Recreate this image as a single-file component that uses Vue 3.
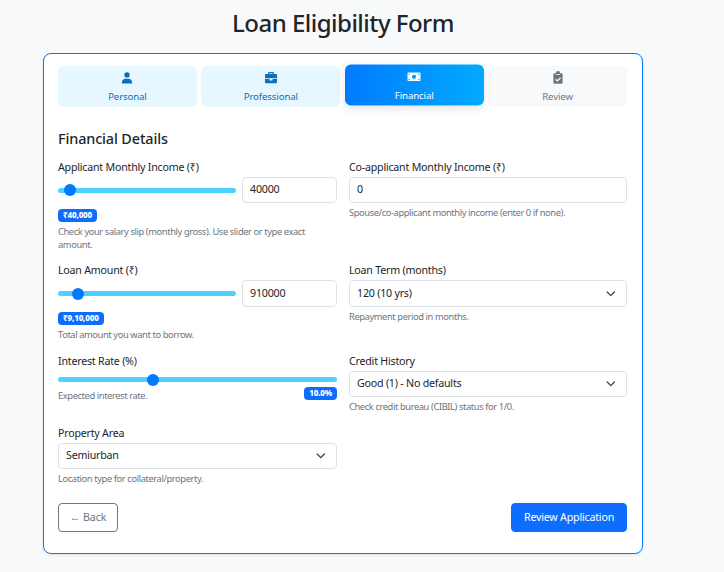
<script setup>
import { ref } from 'vue'

const income = ref('40000')
const coIncome = ref('0')
const amount = ref('910000')
const term = ref('120 (10 yrs)')
const credit = ref('Good (1) - No defaults')
const area = ref('Semiurban')

const sliders = { income: 6.75, amount: 11.25, rate: 34.1 }

const steps = [
  {
    label: 'Personal',
    state: 'done',
    paths: [
      'M7 1.200a2.700 2.700 0 1 1 0 5.400a2.700 2.700 0 0 1 0-5.400z',
      'M1.900 12.500v-.9C1.900 9.100 3.600 7.700 5.700 7.700h2.600c2.100 0 3.800 1.400 3.800 3.900v.9z'
    ]
  },
  {
    label: 'Professional',
    state: 'done',
    paths: [
      'M4 3V2.200Q4 1 5.200 1h3.600Q10 1 10 2.200V3h1.800Q13 3 13 4.200V7.300H1V4.200Q1 3 2.200 3zM5.200 3h3.600V2.200H5.200z',
      'M1 8h4.500v1.400h3V8H13v3.200Q13 12.300 11.800 12.300H2.200Q1 12.300 1 11.200z'
    ]
  },
  {
    label: 'Financial',
    state: 'active',
    paths: [
      'M1.300 3h11.400q.8 0 .8.8v6.900q0 .8-.8.8H1.300q-.8 0-.8-.8V3.800Q.5 3 1.300 3zM7 5.200a2.050 2.050 0 1 0 0 4.100a2.050 2.050 0 0 0 0-4.100zM1.600 4.100v1.300a1.300 1.300 0 0 0 1.300-1.300zM12.400 4.100h-1.300a1.300 1.300 0 0 0 1.300 1.300zM1.600 10.400h1.300a1.300 1.300 0 0 0-1.300-1.300zM12.400 10.400V9.100a1.300 1.300 0 0 0-1.300 1.300z'
    ]
  },
  {
    label: 'Review',
    state: 'todo',
    paths: [
      'M3.600 2.200h1.300a2.100 2.100 0 0 1 4.200 0h1.300q1.200 0 1.200 1.200v8.200q0 1.200-1.200 1.200H3.600q-1.200 0-1.200-1.200V3.400q0-1.200 1.200-1.200zM4.800 3.300v.7h4.400v-.7zM5 7.900l-.8.8 2.200 2.100 3.600-3.600-.9-.9-2.700 2.800z'
    ]
  }
]
</script>

<template>
  <main class="page">
    <h1 class="title"><span>Loan Eligibility Form</span></h1>

    <section class="card">
      <nav class="steps">
        <div v-for="step in steps" :key="step.label" class="step" :class="step.state">
          <svg class="step-icon" viewBox="0 0 14 14" fill="currentColor" fill-rule="evenodd">
            <path v-for="(d, i) in step.paths" :key="i" :d="d" />
          </svg>
          <span class="step-label">{{ step.label }}</span>
        </div>
      </nav>

      <h2 class="heading">Financial Details</h2>

      <form class="fields" @submit.prevent>
        <div class="field">
          <label class="label">Applicant Monthly Income (₹)</label>
          <div class="slider-row">
            <div class="range">
              <div class="thumb" :style="{ left: sliders.income + '%' }"></div>
            </div>
            <input v-model="income" class="control short" />
          </div>
          <span class="badge below">₹40,000</span>
          <p class="help">Check your salary slip (monthly gross). Use slider or type exact<br />amount.</p>
        </div>

        <div class="field">
          <label class="label">Co-applicant Monthly Income (₹)</label>
          <input v-model="coIncome" class="control" />
          <p class="help after-control">Spouse/co-applicant monthly income (enter 0 if none).</p>
        </div>

        <div class="field">
          <label class="label">Loan Amount (₹)</label>
          <div class="slider-row tall">
            <div class="range">
              <div class="thumb" :style="{ left: sliders.amount + '%' }"></div>
            </div>
            <input v-model="amount" class="control short" />
          </div>
          <span class="badge below">₹9,10,000</span>
          <p class="help">Total amount you want to borrow.</p>
        </div>

        <div class="field">
          <label class="label">Loan Term (months)</label>
          <div class="select tall">
            <span>{{ term }}</span>
            <svg class="chevron" viewBox="0 0 16 16"><path d="m2 5 6 6 6-6" /></svg>
          </div>
          <p class="help after-control">Repayment period in months.</p>
        </div>

        <div class="field">
          <label class="label">Interest Rate (%)</label>
          <div class="range full">
            <div class="thumb" :style="{ left: sliders.rate + '%' }"></div>
          </div>
          <div class="rate-row">
            <p class="help">Expected interest rate.</p>
            <span class="badge">10.0%</span>
          </div>
        </div>

        <div class="field">
          <label class="label">Credit History</label>
          <div class="select">
            <span>{{ credit }}</span>
            <svg class="chevron" viewBox="0 0 16 16"><path d="m2 5 6 6 6-6" /></svg>
          </div>
          <p class="help after-control">Check credit bureau (CIBIL) status for 1/0.</p>
        </div>

        <div class="field">
          <label class="label">Property Area</label>
          <div class="select">
            <span>{{ area }}</span>
            <svg class="chevron" viewBox="0 0 16 16"><path d="m2 5 6 6 6-6" /></svg>
          </div>
          <p class="help after-control">Location type for collateral/property.</p>
        </div>
      </form>

      <footer class="actions">
        <button class="btn back" type="button">← Back</button>
        <button class="btn primary" type="button">Review Application</button>
      </footer>
    </section>
  </main>
</template>

<style>
body {
  background: #f8f9fb;
}
</style>

<style scoped>
* {
  box-sizing: border-box;
}

.page {
  width: 724px;
  height: 572px;
  overflow: hidden;
  padding: 7px 81px 0 43px;
  background: #f8f9fb;
  color: #212529;
  font-family: "Noto Sans", "Open Sans", sans-serif;
  font-size: 10.67px;
}

.title {
  margin: 0 0 15px;
  height: 31px;
  line-height: 31px;
  font-size: 24px;
  font-weight: 500;
  text-align: center;
  white-space: nowrap;
  letter-spacing: -0.52px;
}

.card {
  width: 600px;
  height: 501px;
  padding: 12px 15px 0 14px;
  border: 1px solid #007bff;
  border-radius: 8px;
  background: #fff;
  box-shadow: 0 1px 3px rgba(0, 0, 0, 0.09);
}

.steps {
  display: grid;
  grid-template-columns: repeat(4, 1fr);
  gap: 4.5px;
}

.step {
  display: flex;
  flex-direction: column;
  align-items: center;
  height: 41px;
  padding-top: 5px;
  border-radius: 6px;
  font-size: 9.6px;
  line-height: 14px;
  letter-spacing: -0.1px;
}

.step-icon {
  width: 14px;
  height: 14px;
  margin-bottom: 5px;
}

.done {
  background: #e6f7ff;
  color: #0d6ebd;
}

.active {
  transform: translateY(-1.4px);
  background: linear-gradient(90deg, #007bff, #00aaff);
  color: #fff;
  box-shadow: 0 3px 8px rgba(0, 0, 0, 0.1);
}

.todo {
  background: #f8f9fb;
  color: #6c757d;
}

.heading {
  margin: 22px 0 10px;
  height: 20px;
  line-height: 20px;
  font-size: 14.4px;
  font-weight: 500;
  letter-spacing: -0.12px;
}

.fields {
  display: grid;
  grid-template-columns: 279px 278px;
  grid-template-rows: 103px 91px 72px 78px;
  column-gap: 12px;
}

.field {
  display: flex;
  flex-direction: column;
}

.label {
  height: 16px;
  margin-bottom: 2px;
  line-height: 16px;
  white-space: nowrap;
  letter-spacing: -0.22px;
}

.slider-row {
  display: flex;
  align-items: center;
  gap: 6px;
  height: 26px;
}

.range {
  position: relative;
  flex: 1;
  height: 5px;
  border-radius: 3px;
  background: #4dd2ff;
}

.range.full {
  flex: none;
  margin-top: 6px;
}

.thumb {
  position: absolute;
  top: 50%;
  width: 12px;
  height: 12px;
  border-radius: 50%;
  background: #007bff;
  transform: translate(-50%, -50%);
}

.control,
.select {
  width: 100%;
  height: 26px;
  padding: 0 8px 2px 7px;
  border: 1px solid #dee2e6;
  border-radius: 4px;
  background: #fff;
  color: #212529;
  font-family: inherit;
  font-size: 10.67px;
  letter-spacing: -0.22px;
  outline: none;
}

.control.short {
  flex: none;
  width: 95px;
}

.select {
  display: flex;
  align-items: center;
  justify-content: space-between;
  padding-right: 10px;
}

.tall,
.tall .control {
  height: 27px;
}

.chevron {
  width: 9.6px;
  height: 9.6px;
  margin-top: 2px;
  fill: none;
  stroke: #343a40;
  stroke-width: 2;
  stroke-linecap: round;
  stroke-linejoin: round;
}

.badge {
  flex: none;
  height: 13px;
  padding: 0 5px;
  border-radius: 4px;
  background: #0d6efd;
  color: #fff;
  font-size: 8px;
  font-weight: 800;
  line-height: 11px;
  letter-spacing: -0.15px;
}

.below {
  align-self: flex-start;
  margin: 6px 0 3px;
}

.tall + .below {
  margin-top: 5px;
}

.help {
  margin: 0;
  color: #6c757d;
  font-size: 9.33px;
  line-height: 13px;
  white-space: nowrap;
  letter-spacing: -0.4px;
}

.after-control {
  margin-top: 3px;
}

.rate-row {
  display: flex;
  align-items: flex-start;
  justify-content: space-between;
  padding-top: 5px;
}

.rate-row .help {
  margin-top: 2px;
}

.actions {
  display: flex;
  justify-content: space-between;
}

.btn {
  height: 29px;
  padding: 0 0 1px;
  border: 1px solid #6c757d;
  border-radius: 4px;
  background: #fff;
  color: #6c757d;
  font-family: inherit;
  font-size: 10.67px;
  letter-spacing: -0.1px;
}

.back {
  width: 60px;
}

.primary {
  width: 116px;
  border-color: #0d6efd;
  background: #0d6efd;
  color: #fff;
  letter-spacing: -0.2px;
}
</style>
